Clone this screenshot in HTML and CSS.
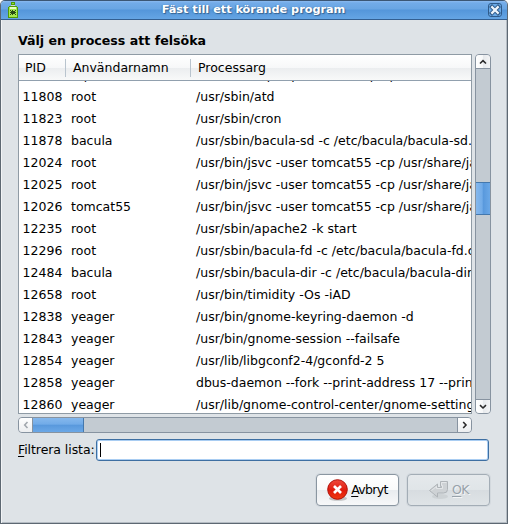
FILE: index.html
```
<!DOCTYPE html>
<html lang="sv">
<head>
<meta charset="utf-8">
<title>Fäst till ett körande program</title>
<link rel="stylesheet" href="styles.css">
</head>
<body>
<div class="window">
  <header class="titlebar">
    <svg class="app-icon" width="12" height="18" viewBox="0 0 12 18" shape-rendering="crispEdges">
      <path d="M4 1h4v3H4z" fill="#4e9a06"/><path d="M5 2h2v1H5z" fill="#8ae234"/>
      <path d="M4 4h4v2H4z" fill="#d3d7cf"/>
      <path d="M2 5h8v1h1v11H1V6h1z" fill="#4e9a06"/><path d="M2 6h8v10H2z" fill="#a5e84f"/>
      <path d="M3 6h6v2H3z" fill="#e6ffc4"/>
      <path d="M4 10h4v3H4zM3 9h1v1H3zM8 9h1v1H8zM3 13h1v1H3zM8 13h1v1H8zM3 11h6v1H3zM5 9h1v5H5z" fill="#294b16"/>
    </svg>
    <span class="title">Fäst till ett körande program</span>
    <svg class="close" width="14" height="14" viewBox="0 0 14 14">
      <rect x=".5" y=".5" width="13" height="13" rx="2.5" fill="#6aa9e6" stroke="#2f5b8b"/>
      <path d="M4 4l6 6M10 4l-6 6" stroke="#2f5b8b" stroke-width="4.2" stroke-linecap="square"/>
      <path d="M4.200 4.200l5.600 5.600M9.800 4.200l-5.600 5.600" stroke="#eef5fc" stroke-width="2.3" stroke-linecap="square"/>
    </svg>
  </header>
  <main class="content">
    <h1>Välj en process att felsöka</h1>
    <div class="list-area">
      <div class="tree">
        <div class="row head"><span>PID</span><span>Användarnamn</span><span>Processarg</span></div>
        <div class="rows">
          <div class="row"><span>11790</span><span>ntp</span><span>/usr/sbin/ntpd -p /var/run/ntpd.pid</span></div>
          <div class="row"><span>11808</span><span>root</span><span>/usr/sbin/atd</span></div>
          <div class="row"><span>11823</span><span>root</span><span>/usr/sbin/cron</span></div>
          <div class="row"><span>11878</span><span>bacula</span><span>/usr/sbin/bacula-sd -c /etc/bacula/bacula-sd.conf</span></div>
          <div class="row"><span>12024</span><span>root</span><span>/usr/bin/jsvc -user tomcat55 -cp /usr/share/java</span></div>
          <div class="row"><span>12025</span><span>root</span><span>/usr/bin/jsvc -user tomcat55 -cp /usr/share/java</span></div>
          <div class="row"><span>12026</span><span>tomcat55</span><span>/usr/bin/jsvc -user tomcat55 -cp /usr/share/java</span></div>
          <div class="row"><span>12235</span><span>root</span><span>/usr/sbin/apache2 -k start</span></div>
          <div class="row"><span>12296</span><span>root</span><span>/usr/sbin/bacula-fd -c /etc/bacula/bacula-fd.conf</span></div>
          <div class="row"><span>12484</span><span>bacula</span><span>/usr/sbin/bacula-dir -c /etc/bacula/bacula-dir.conf</span></div>
          <div class="row"><span>12658</span><span>root</span><span>/usr/bin/timidity -Os -iAD</span></div>
          <div class="row"><span>12838</span><span>yeager</span><span>/usr/bin/gnome-keyring-daemon -d</span></div>
          <div class="row"><span>12843</span><span>yeager</span><span>/usr/bin/gnome-session --failsafe</span></div>
          <div class="row"><span>12854</span><span>yeager</span><span>/usr/lib/libgconf2-4/gconfd-2 5</span></div>
          <div class="row"><span>12858</span><span>yeager</span><span>dbus-daemon --fork --print-address 17 --print-pid</span></div>
          <div class="row"><span>12860</span><span>yeager</span><span>/usr/lib/gnome-control-center/gnome-settings-daemon</span></div>
        </div>
      </div>
      <div class="vbar">
        <div class="step up"><svg width="8" height="6"><path d="M1 4.5L4 1.7l3 2.8"/></svg></div>
        <div class="vthumb"></div>
        <div class="step down"><svg width="8" height="6"><path d="M1 1.2L4 4l3-2.8"/></svg></div>
      </div>
      <div class="hbar">
        <div class="step left"><svg width="6" height="8"><path d="M4.5 1L1.7 4l2.8 3"/></svg></div>
        <div class="hthumb"></div>
        <div class="step right"><svg width="6" height="8"><path d="M1.2 1L4 4 1.2 7"/></svg></div>
      </div>
    </div>
    <div class="filter"><label><u>F</u>iltrera lista:</label><div class="entry"><i class="caret"></i></div></div>
    <div class="actions">
      <button class="cancel">
        <svg width="22" height="22" viewBox="0 0 22 22">
          <defs><linearGradient id="red" x2="0" y2="1"><stop stop-color="#ef4a3c"/><stop offset=".55" stop-color="#e01a0c"/><stop offset="1" stop-color="#f03a10"/></linearGradient></defs>
          <ellipse cx="11" cy="19.5" rx="9" ry="2.3" fill="#888" opacity=".45"/>
          <circle cx="10.5" cy="10.5" r="9.8" fill="url(#red)" stroke="#b01008"/>
          <path d="M7 7l7 7M14 7l-7 7" stroke="#fff" stroke-width="2.7"/>
        </svg><span><u>A</u>vbryt</span>
      </button>
      <button class="ok" disabled>
        <svg width="22" height="22" viewBox="0 0 22 22">
          <ellipse cx="12" cy="17.5" rx="8" ry="2.5" fill="#b8bdc1" opacity=".4"/>
          <path d="M1.500 11.500l8-6.500v3.500h4V7.500h-1v-5h7v8q0 3.500-4 3.500h-6v4z" fill="#ced2d5" stroke="#afb4b8"/>
          <path d="M3.500 11.500l5-4v2h6V6.500h-1v-3h5" fill="none" stroke="#e4e7e9"/>
        </svg><span><u>O</u>K</span>
      </button>
    </div>
  </main>
</div>
</body>
</html>
```
FILE: styles.css
```
* { box-sizing: border-box; }
body { margin: 0; background: #fff; font: 12.5px/22px "DejaVu Sans", sans-serif; color: #000; overflow: hidden; }
.window {
  width: 508px; height: 524px; background: #dee3e7;
  border: 1px solid #3f5973; border-color: #3b5674 #5d6872 #5d6872 #5d6872;
  border-radius: 5px 5px 0 0; overflow: hidden;
  box-shadow: inset 1px 0 #f2f4f6, inset -1px -1px #b5bcc3;
}
.titlebar {
  height: 19px; display: flex; align-items: center; padding: 0 5px 0 6px;
  border-bottom: 1px solid #335f91;
  background: linear-gradient(#8abaf0 0, #72abe8 2px, #69a5e3 8px, #5496da 9px, #65a5e4 18px);
}
.title {
  flex: 1; text-align: center; color: #fff; font-weight: bold; font-size: 11.25px; line-height: 18px;
  text-shadow: 1px 1px 1px #34618f, -1px 0 1px #4a80b6;
}
.close { display: block; }
.content { padding: 0 17px; }
h1 { margin: 0; padding-top: 10px; height: 34px; font-size: 12.6px; line-height: 22px; }
.list-area { display: grid; grid-template-columns: 454px 16px; grid-template-rows: 360px 16px; gap: 3px; }
.tree { background: #fff; border: 1px solid #8f9ba5; overflow: hidden; display: flex; flex-direction: column; }
.row { display: grid; grid-template-columns: 48px 125px 300px; height: 22px; white-space: nowrap; }
.row span { padding-left: 4px; }
.row span:first-child { letter-spacing: .03px; padding-left: 3.5px; }
.rows { flex: 1; overflow: hidden; }
.rows .row:first-child { margin-top: -17px; }
.head {
  height: 26px; flex: none; line-height: 26px; border-bottom: 1px solid #91a0ae;
  background: linear-gradient(#fff, #f7f8f9 13px, #ebedef 13px, #f8f9f9);
}
.head span, .head span:first-child { padding-left: 6px; position: relative; }
.head span + span::before { content: ""; position: absolute; left: -2px; top: 4px; width: 1px; height: 18px; background: #b9c4ce; }
.vbar, .hbar { background: #c3cbd2; border: 1px solid #8793a0; display: flex; }
.vbar { flex-direction: column; border-radius: 4px; overflow: hidden; }
.hbar { border-radius: 4px; overflow: hidden; }
.step { width: 14px; height: 14px; flex: none; display: flex; align-items: center; justify-content: center; background: linear-gradient(#fff, #eceef0); }
.step svg { fill: none; stroke: #2b2b2b; stroke-width: 1.6; }
.up, .down { background: linear-gradient(90deg, #fff, #f6f7f8 50%, #e6e9ec 51%, #f3f4f5); }
.up { border-bottom: 1px solid #8793a0; }
.down { margin-top: auto; border-top: 1px solid #8793a0; }
.left { border-right: 1px solid #8793a0; }
.step.left svg { stroke: #a2a8ae; }
.right { margin-left: auto; border-left: 1px solid #8793a0; }
.vthumb { height: 33px; margin-top: 113px; border: solid #4478ad; border-width: 1px 0; background: linear-gradient(90deg, #85b8ed, #71abe8 45%, #5898dc 50%, #6ba8e7); }
.hthumb { width: 51px; border-right: 1px solid #4478ad; background: linear-gradient(#85b8ed, #71abe8 45%, #5898dc 50%, #6ba8e7); }
.filter { display: flex; height: 22px; margin-top: 6px; width: 471px; }
.filter label { width: 78px; white-space: nowrap; line-height: 22px; letter-spacing: -.07px; }
.entry { flex: 1; background: #fff; border: 1px solid #3e6fa2; border-radius: 3px; box-shadow: inset 0 0 0 1px #a9cdf2; padding: 3px; }
.caret { display: block; width: 1px; height: 14px; background: #000; }
.actions { display: flex; gap: 8px; justify-content: flex-end; width: 472px; margin-top: 13px; }
button {
  width: 83px; height: 32px; padding: 0; border: 1px solid #8a96a1; border-radius: 4px;
  background: linear-gradient(#fff, #f9fafa 50%, #e9ecef 51%, #f7f8f9); box-shadow: 0 0 0 1px #d3d9de;
  font: inherit; color: #000; display: flex; align-items: center; justify-content: center; gap: 2px;
}
button.cancel span { letter-spacing: -.65px; }
button.ok { color: #98a2aa; border-color: #a3adb6; background: linear-gradient(#e5e9ec, #e0e5e8 50%, #d7dce0 51%, #dfe4e7); }
button.ok span { text-shadow: 1px 1px #f3f5f6; letter-spacing: -.5px; }
u { text-decoration-thickness: 1px; text-underline-offset: 2px; }
```
